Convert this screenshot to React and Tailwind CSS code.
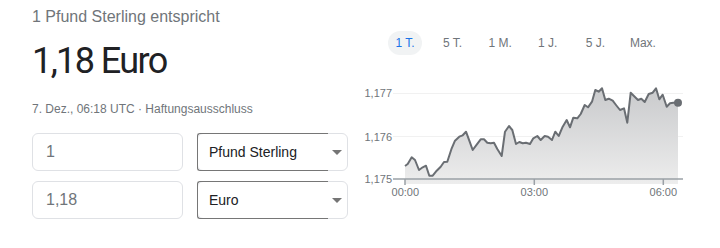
import React from "react";

const RAW = [
  [195,258],[203,252],[215,232],[225,240],[237,270],[248,262],[258,257],[268,287],[278,287],[290,272],[302,260],[312,246],[322,245],[335,205],[345,182],[358,170],[368,166],[378,155],[388,182],[398,210],[410,194],[422,178],[432,178],[442,188],[452,190],[462,188],[472,207],[485,228],[495,155],[507,138],[517,150],[528,192],[538,186],[548,190],[558,188],[570,192],[580,175],[592,168],[602,180],[614,168],[624,170],[636,180],[646,155],[656,168],[668,140],[680,120],[690,142],[700,113],[712,115],[722,102],[734,75],[744,82],[756,65],[766,30],[776,35],[786,25],[796,60],[806,56],[818,62],[828,75],[840,90],[852,85],[862,128],[872,38],[884,50],[894,60],[904,56],[914,66],[926,42],[938,38],[948,25],[958,58],[968,44],[980,80],[990,70],[1000,68],[1014,68]
];
const PTS = RAW.map(([x, y]) => [x / 3, y / 3]);
const LINE = PTS.map(([x, y], i) => `${i ? "L" : "M"}${x.toFixed(1)},${y.toFixed(1)}`).join(" ");
const last = PTS[PTS.length - 1];
const AREA = `${LINE} L${last[0].toFixed(1)},104 L${PTS[0][0].toFixed(1)},104 Z`;

function Chart() {
  const font = "'Liberation Sans', Arial, sans-serif";
  return (
    <svg width="372" height="120" viewBox="8 0 372 120" className="block">
      <defs>
        <linearGradient id="g" x1="0" y1="8" x2="0" y2="104" gradientUnits="userSpaceOnUse">
          <stop offset="0" stopColor="#c9cacc" />
          <stop offset="1" stopColor="#ededed" />
        </linearGradient>
      </defs>
      <line x1="53" y1="13.5" x2="343" y2="13.5" stroke="#f1f1f1" strokeWidth="1" />
      <line x1="53" y1="56.5" x2="343" y2="56.5" stroke="#f1f1f1" strokeWidth="1" />
      <path d={AREA} fill="url(#g)" />
      <path d={LINE} fill="none" stroke="#6a6e73" strokeWidth="2" strokeLinejoin="round" />
      <circle cx={last[0]} cy={last[1]} r="4" fill="#6a6e73" />
      <line x1="53" y1="99" x2="343" y2="99" stroke="#9aa0a6" strokeWidth="1.5" />
      <line x1="65" y1="99" x2="65" y2="105" stroke="#9aa0a6" strokeWidth="1.5" />
      <line x1="194.3" y1="99" x2="194.3" y2="105" stroke="#9aa0a6" strokeWidth="1.5" />
      <line x1="323.3" y1="99" x2="323.3" y2="105" stroke="#9aa0a6" strokeWidth="1.5" />
      <g fill="#70757a" fontSize="11" fontFamily={font}>
        <text x="52" y="17" textAnchor="end">1,177</text>
        <text x="52" y="60.5" textAnchor="end">1,176</text>
        <text x="52" y="102.5" textAnchor="end">1,175</text>
        <text x="65.3" y="116" textAnchor="middle">00:00</text>
        <text x="194.3" y="116" textAnchor="middle">03:00</text>
        <text x="323.3" y="116" textAnchor="middle">06:00</text>
      </g>
    </svg>
  );
}

function Caret() {
  return (
    <svg width="10" height="5" viewBox="0 0 10 5" className="block">
      <path d="M0 0 L10 0 L5 5 Z" fill="#757575" />
    </svg>
  );
}

function Select({ label }) {
  return (
    <div className="flex h-[38px] w-[151px] shrink-0 rounded-[6px] border border-[#dfe1e5] bg-white">
      <div className="-my-px -ml-px flex w-[131px] items-center rounded-l-[3px] border-y border-l border-[#767676] pl-[11px] text-[14px] text-[#202124]">
        {label}
      </div>
      <div className="flex flex-1 items-center justify-center pr-[2px]">
        <Caret />
      </div>
    </div>
  );
}

function Input({ value }) {
  return (
    <div className="flex h-[38px] w-[151px] shrink-0 items-center rounded-[6px] border border-[#dfe1e5] bg-white pl-[13px] text-[16px] text-[#70757a]">
      {value}
    </div>
  );
}

const tabs = ["1 T.", "5 T.", "1 M.", "1 J.", "5 J.", "Max."];

export default function App() {
  return (
    <div
      className="flex h-[248px] w-[720px] overflow-hidden bg-white"
      style={{ fontFamily: "'Liberation Sans', Arial, sans-serif" }}
    >
      <div className="flex w-[348px] shrink-0 flex-col pl-[32px]">
        <div className="mt-[5px] text-[16px] leading-[24px] text-[#70757a]">1 Pfund Sterling entspricht</div>
        <div
          className="mt-[10px] text-[36px] leading-[44px] tracking-[-1.6px] text-[#202124]"
          style={{ fontFamily: "Roboto, 'Liberation Sans', sans-serif" }}
        >
          1,18 Euro
        </div>
        <div className="mt-[18px] text-[12px] leading-[16px] text-[#70757a]">
          7. Dez., 06:18 UTC · Haftungsausschluss
        </div>
        <div className="mt-[16px] flex gap-[14px]">
          <Input value="1" />
          <Select label="Pfund Sterling" />
        </div>
        <div className="mt-[10px] flex gap-[14px]">
          <Input value="1,18" />
          <Select label="Euro" />
        </div>
      </div>
      <div className="flex flex-1 flex-col pt-[31px]">
        <div className="flex gap-[13.6px] pl-[40px]">
          {tabs.map((t, i) => (
            <div
              key={t}
              className={
                "flex h-[24px] w-[34px] items-center justify-center whitespace-nowrap rounded-full text-[12px] " +
                (i === 0 ? "bg-[#f1f3f4] text-[#1a73e8]" : "text-[#70757a]")
              }
            >
              {t}
            </div>
          ))}
        </div>
        <div className="mt-[25px]">
          <Chart />
        </div>
      </div>
    </div>
  );
}
